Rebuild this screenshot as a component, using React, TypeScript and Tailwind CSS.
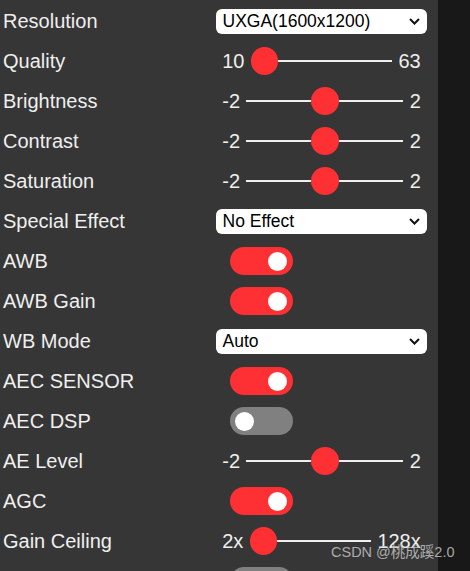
import React from "react";

type Row =
  | { label: string; kind: "select"; value: string }
  | { label: string; kind: "range"; min: string; max: string; frac: number }
  | { label: string; kind: "toggle"; on: boolean };

const rows: Row[] = [
  { label: "Resolution", kind: "select", value: "UXGA(1600x1200)" },
  { label: "Quality", kind: "range", min: "10", max: "63", frac: 0 },
  { label: "Brightness", kind: "range", min: "-2", max: "2", frac: 0.5 },
  { label: "Contrast", kind: "range", min: "-2", max: "2", frac: 0.5 },
  { label: "Saturation", kind: "range", min: "-2", max: "2", frac: 0.5 },
  { label: "Special Effect", kind: "select", value: "No Effect" },
  { label: "AWB", kind: "toggle", on: true },
  { label: "AWB Gain", kind: "toggle", on: true },
  { label: "WB Mode", kind: "select", value: "Auto" },
  { label: "AEC SENSOR", kind: "toggle", on: true },
  { label: "AEC DSP", kind: "toggle", on: false },
  { label: "AE Level", kind: "range", min: "-2", max: "2", frac: 0.5 },
  { label: "AGC", kind: "toggle", on: true },
  { label: "Gain Ceiling", kind: "range", min: "2x", max: "128x", frac: 0 },
  // next row's label sits below the fold, only its switch peeks in
  { label: "", kind: "toggle", on: false },
];

function Select({ value }: { value: string }) {
  return (
    <div className="flex h-[25px] w-full items-center justify-between rounded-[6px] bg-white pl-[6.5px] pr-[7px] text-[17.5px] text-black">
      <span>{value}</span>
      <svg width="11" height="7" viewBox="0 0 11 7" fill="none">
        <path d="M1 1l4.5 4.5L10 1" stroke="#111" strokeWidth="2" />
      </svg>
    </div>
  );
}

function Range({ min, max, frac }: { min: string; max: string; frac: number }) {
  return (
    <div className="flex w-full items-center text-[20px] text-[#efefef]">
      <span className="px-[6.25px]">{min}</span>
      <div className="relative flex h-[27.5px] flex-1 items-center">
        <div className="h-[2.5px] w-full bg-[#efefef]" />
        <div
          className="absolute top-0 h-[27.5px] w-[27.5px] rounded-full bg-[#ff3034]"
          style={{ left: `calc((100% - 27.5px) * ${frac})` }}
        />
      </div>
      <span className="px-[6.25px]">{max}</span>
    </div>
  );
}

function Toggle({ on }: { on: boolean }) {
  return (
    <div
      className={`relative ml-[14px] h-[27.5px] w-[62.5px] rounded-full ${on ? "bg-[#ff3034]" : "bg-[#808080]"}`}
    >
      <div
        className={`absolute top-[4.25px] h-[19px] w-[19px] rounded-full bg-white ${on ? "left-[37.5px]" : "left-[5px]"}`}
      />
    </div>
  );
}

export default function App() {
  return (
    <div
      className="relative flex h-[571px] w-[470px] overflow-hidden bg-[#181818]"
      style={{ fontFamily: '"Liberation Sans", Arial, sans-serif' }}
    >
      <div className="w-[438px] shrink-0 bg-[#363636] pl-[3px] pr-[11px] pt-[1px]">
        {rows.map((r, i) => (
          <div key={i} className="flex h-10 items-center">
            <div className="w-[213px] shrink-0 text-[20px] text-[#efefef]">{r.label}</div>
            <div className="flex w-[211px] items-center">
              {r.kind === "select" && <Select value={r.value} />}
              {r.kind === "range" && <Range min={r.min} max={r.max} frac={r.frac} />}
              {r.kind === "toggle" && <Toggle on={r.on} />}
            </div>
          </div>
        ))}
      </div>
      <div className="flex-1" />
      <span
        className="absolute left-[331px] top-[542px] text-[14.5px] text-[#c4c4c4]/85"
        style={{ fontFamily: '"Liberation Sans", "Noto Sans CJK SC", sans-serif' }}
      >
        CSDN @桃成蹊2.0
      </span>
    </div>
  );
}
